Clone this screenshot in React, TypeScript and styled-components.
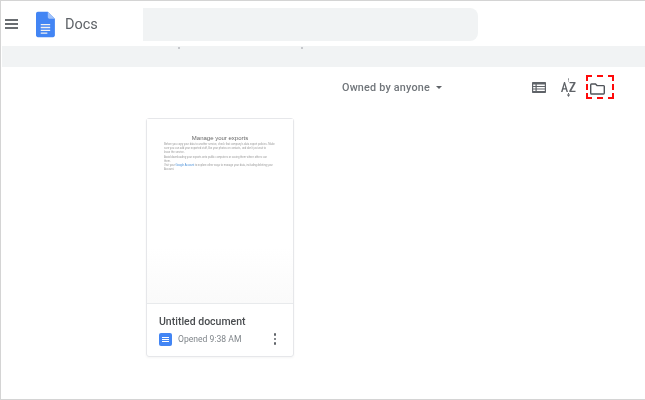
import styled, { createGlobalStyle } from "styled-components";

const GlobalStyle = createGlobalStyle`
  html, body {
    margin: 0;
    padding: 0;
    background: #fff;
  }
  * {
    box-sizing: border-box;
  }
`;

const DocsLogo = ({ size }: { size: number }) => (
  <svg width={size * 0.7} height={size} viewBox="0 0 20 27">
    <path d="M12.5 0H2C.9 0 0 .9 0 2v23c0 1.100.9 2 2 2h16c1.100 0 2-.9 2-2V7.500z" fill="#4285f4" />
    <path d="M12.5 0v5.500c0 1.100.9 2 2 2H20z" fill="#a1c2fa" />
    <path d="M5 13h10v1.400H5zM5 16h10v1.400H5zM5 19h10v1.400H5zM5 22h7v1.400H5z" fill="#f1f1f1" />
  </svg>
);

const App = () => {
  return (
    <Frame>
      <GlobalStyle />
      <Header>
        <MenuIcon>
          <span />
          <span />
          <span />
        </MenuIcon>
        <LogoSlot>
          <DocsLogo size={27} />
        </LogoSlot>
        <AppName>Docs</AppName>
        <SearchBox />
      </Header>
      <GreyStrip>
        <Speck />
        <Speck />
      </GreyStrip>
      <Toolbar>
        <OwnerFilter>
          Owned by anyone
          <Caret />
        </OwnerFilter>
        <ToolIcons>
          <svg width="14" height="11" viewBox="0 0 14 11">
            <path
              d="M1 0h12c.6 0 1 .4 1 1v9c0 .6-.4 1-1 1H1c-.6 0-1-.4-1-1V1c0-.6.4-1 1-1zM1.200 2.600v1.500h2.300V2.600zm3.500 0v1.500h8.100V2.600zM1.200 5.100v1.500h2.300V5.100zm3.500 0v1.500h8.100V5.100zM1.200 7.600v1.500h2.300V7.600zm3.500 0v1.500h8.100V7.600z"
              fill="#5f6368"
              fillRule="evenodd"
            />
          </svg>
          <SortGlyph>
            <svg width="15" height="19" viewBox="0 0 15 19">
              <path d="M3 4 L0 14 H1.500 L2.200 11.500 H4.800 L5.500 14 H7 L4 4 Z M2.600 10.200 L3.500 6.600 L4.400 10.200 Z" fill="#5f6368" fillRule="evenodd" />
              <path d="M8.500 4H14.500V5.200L10.300 12.800H14.500V14H8.300V12.800L12.500 5.200H8.500z" fill="#5f6368" />
              <path d="M7.500 0.500v1.200M7.500 2.600v0.800" stroke="#5f6368" strokeWidth="1" />
              <path d="M7.500 15v1.500" stroke="#5f6368" strokeWidth="1" />
              <path d="M5.800 16.500h3.400L7.500 19z" fill="#5f6368" />
            </svg>
          </SortGlyph>
          <FolderHighlight>
            <svg width="15" height="12" viewBox="0 0 15 12">
              <path
                d="M1.500 1H5.500L7 2.600H13.500C14 2.600 14.300 3 14.300 3.500V10.100C14.300 10.600 14 11 13.500 11H1.500C1 11 .7 10.600 .7 10.100V1.900C.7 1.400 1 1 1.500 1Z"
                fill="none"
                stroke="#50545a"
                strokeWidth="1.400"
              />
            </svg>
          </FolderHighlight>
        </ToolIcons>
      </Toolbar>
      <Content>
        <DocCard>
          <Preview>
            <PreviewTitle>Manage your exports</PreviewTitle>
            <PreviewBody>
              <PreviewLine>Before you copy your data to another service, check that company's data export policies. Make</PreviewLine>
              <PreviewLine>sure you can add your exported stuff, like your photos or contacts, and don't just wait to</PreviewLine>
              <PreviewLine>leave the service.</PreviewLine>
              <PreviewLine>Avoid downloading your exports onto public computers or saving them where others can</PreviewLine>
              <PreviewLine>them.</PreviewLine>
              <PreviewLine>
                Visit your <PreviewLink>Google Account</PreviewLink> to explore other ways to manage your data, including deleting your
              </PreviewLine>
              <PreviewLine>Account.</PreviewLine>
            </PreviewBody>
          </Preview>
          <CardFooter>
            <DocTitle>Untitled document</DocTitle>
            <MetaRow>
              <DocBadge>
                <i />
                <i />
                <i />
              </DocBadge>
              <OpenedText>Opened 9:38 AM</OpenedText>
              <MoreDots>
                <span />
                <span />
                <span />
              </MoreDots>
            </MetaRow>
          </CardFooter>
        </DocCard>
      </Content>
    </Frame>
  );
};

export default App;

// page frame
const Frame = styled.div`
  width: 645px;
  height: 400px;
  overflow: hidden;
  border: 1px solid #d4d4d4;
  border-right: none;
  background: #fff;
  font-family: Roboto, "Liberation Sans", sans-serif;
  filter: blur(0.35px);
`;

// top bar
const Header = styled.header`
  display: flex;
  align-items: center;
  height: 45px;
  padding: 6px 0 5px 4px;
`;

const MenuIcon = styled.div`
  display: flex;
  flex-direction: column;
  gap: 2.5px;
  width: 13px;
  span {
    display: block;
    height: 1.5px;
    background: #6a6e72;
  }
`;

const LogoSlot = styled.div`
  display: flex;
  margin-left: 18px;
`;

const AppName = styled.div`
  margin-left: 10px;
  width: 78px;
  font-size: 14.5px;
  color: #5f6368;
`;

const SearchBox = styled.div`
  width: 335px;
  height: 33px;
  background: #f1f3f4;
  border-radius: 0 8px 8px 0;
`;

// grey strip below the bar
const GreyStrip = styled.div`
  display: flex;
  height: 21px;
  margin-left: 1px;
  padding-left: 176px;
  gap: 121px;
  background: #f1f3f4;
`;

const Speck = styled.span`
  width: 2px;
  height: 2px;
  margin-top: 1px;
  background: #c6c8cc;
`;

// sort and view toolbar
const Toolbar = styled.div`
  display: flex;
  align-items: center;
  height: 40px;
`;

const OwnerFilter = styled.div`
  display: flex;
  align-items: center;
  margin-left: 341px;
  font-size: 10.8px;
  font-weight: 500;
  letter-spacing: 0.2px;
  color: #70757a;
`;

const Caret = styled.span`
  margin-left: 6px;
  border-left: 3.5px solid transparent;
  border-right: 3.5px solid transparent;
  border-top: 3.5px solid #5f6368;
`;

const ToolIcons = styled.div`
  display: flex;
  align-items: center;
  margin-left: auto;
  margin-right: 31px;
  gap: 13px;
`;

const SortGlyph = styled.div`
  display: flex;
  margin-left: 2px;
`;

const FolderHighlight = styled.div`
  display: flex;
  align-items: flex-end;
  width: 28px;
  height: 24px;
  margin-left: -3px;
  padding: 0 0 2px 2px;
  border: 2px dashed #ff0a0a;
`;

// document grid
const Content = styled.main`
  padding: 11px 0 0 145px;
`;

const DocCard = styled.article`
  display: flex;
  flex-direction: column;
  width: 148px;
  height: 239px;
  border: 1px solid #e6e7ea;
  border-radius: 3px;
  box-shadow: 0 1px 2px rgba(60, 64, 67, 0.05);
`;

const Preview = styled.div`
  height: 185px;
  padding: 15px 17px 0;
  border-bottom: 1px solid #e8eaec;
  background: linear-gradient(to bottom, #fff 70%, #fafafa 100%);
  overflow: hidden;
`;

const PreviewTitle = styled.div`
  font-family: "Liberation Sans", Arial, sans-serif;
  font-size: 6px;
  line-height: 8px;
  text-align: center;
  color: #666;
`;

const PreviewBody = styled.div`
  margin-top: 1px;
  font-family: "Liberation Sans", Arial, sans-serif;
  font-size: 2.65px;
  line-height: 4.2px;
  color: #999;
`;

const PreviewLine = styled.div`
  white-space: nowrap;
`;

const PreviewLink = styled.span`
  color: #4a90d9;
`;

const CardFooter = styled.div`
  flex: 1;
  padding: 11px 12px 0;
`;

const DocTitle = styled.div`
  font-size: 10.5px;
  font-weight: 500;
  line-height: 13px;
  color: #4a4d50;
`;

const MetaRow = styled.div`
  display: flex;
  align-items: center;
  margin-top: 4px;
  height: 14px;
`;

const DocBadge = styled.div`
  display: flex;
  flex-direction: column;
  justify-content: center;
  gap: 1px;
  width: 13px;
  height: 13px;
  padding: 0 3px;
  border-radius: 2px;
  background: #4285f4;
  i {
    display: block;
    height: 1px;
    background: #fff;
  }
`;

const OpenedText = styled.span`
  margin-left: 6px;
  font-size: 8.6px;
  color: #80868b;
`;

const MoreDots = styled.div`
  display: flex;
  flex-direction: column;
  gap: 2px;
  margin-left: auto;
  margin-right: 5px;
  span {
    display: block;
    width: 2.5px;
    height: 2.5px;
    border-radius: 50%;
    background: #5f6368;
  }
`;
